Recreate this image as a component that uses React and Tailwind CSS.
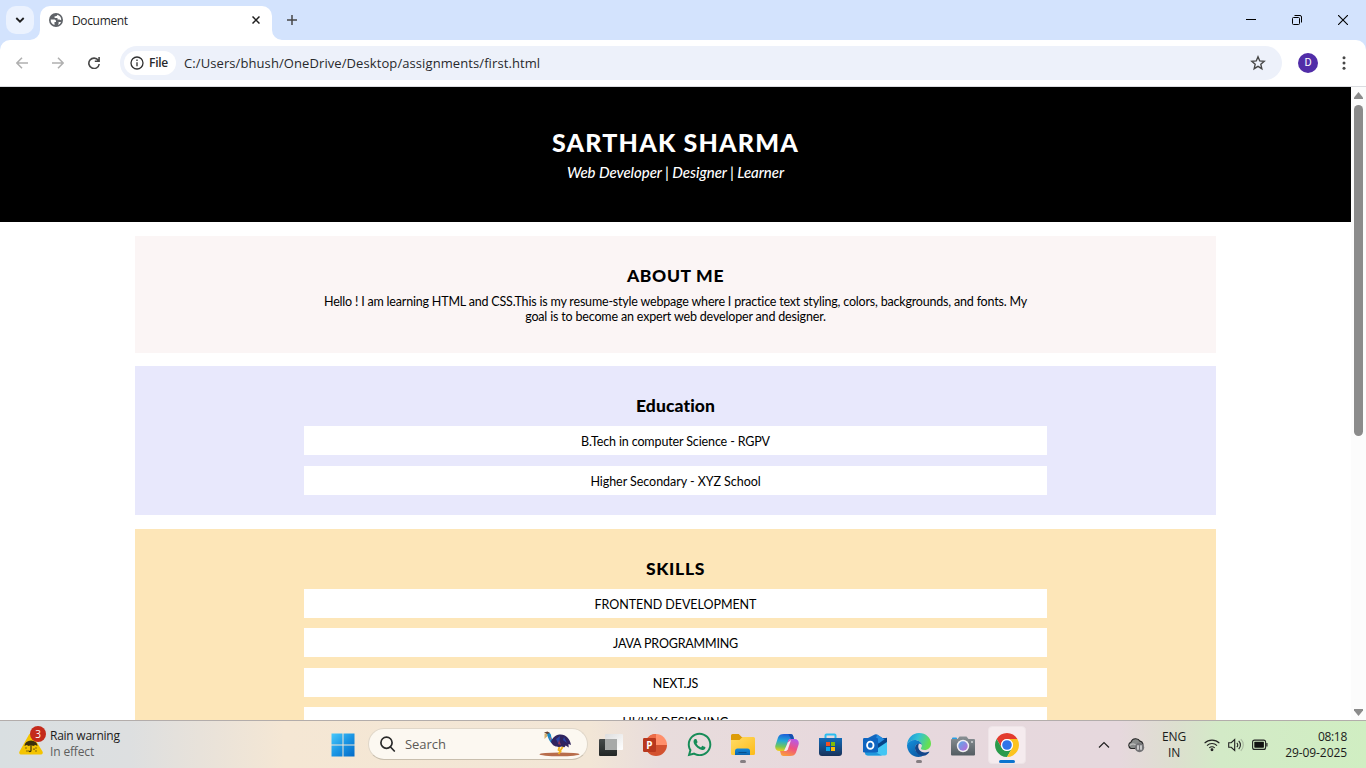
import React from "react";
import { FaWhatsapp } from "react-icons/fa";

function TabStrip() {
  return (
    <div className="flex h-10 shrink-0 bg-[#d3e3fd]">
      <div className="flex w-10 justify-center pt-[6px]">
        <div className="flex h-7 w-7 items-center justify-center rounded-[10px] bg-[#ebf2fe]">
          <svg width="10" height="10" viewBox="0 0 10 10" fill="none" stroke="#1f1f1f" strokeWidth="1.8"><path d="M1.3 3l3.7 3.7L8.7 3" /></svg>
        </div>
      </div>
      <div className="relative mt-[6px] flex h-[34px] w-[232px] items-start rounded-t-[10px] bg-white pl-[9px] pt-[7px]">
        <svg className="absolute -left-[10px] bottom-0" width="10" height="10" viewBox="0 0 10 10"><path d="M10 0v10H0A10 10 0 0 0 10 0z" fill="#fff" /></svg>
        <svg className="absolute -right-[10px] bottom-0" width="10" height="10" viewBox="0 0 10 10"><path d="M0 0v10h10A10 10 0 0 1 0 0z" fill="#fff" /></svg>
        <svg width="14" height="14" viewBox="0 0 14 14">
          <circle cx="7" cy="7" r="7" fill="#5f6368" />
          <path d="M1.700 6.500h3.100c1.500 0 2.200.7 2.200 1.700v.9H5.500v2.800C3 11.400 1.400 9.200 1.700 6.500zM8.200 1.800c0 1-.5 1.400-1.400 1.400H5.600v1.700h2.900v1.600h1.800l1.900.7c.3-2.700-1.300-4.900-4-5.400zM8.900 12c1.500-.5 2.600-1.500 3.100-3H9.600v1.400z" fill="#fff" />
        </svg>
        <span className="ml-[9px] text-[12px] leading-[15px] tracking-[-0.35px] text-[#1f1f1f]">Document</span>
        <svg className="ml-auto mr-[12px] mt-[3px]" width="8" height="8" viewBox="0 0 8 8" stroke="#1f1f1f" strokeWidth="1.500"><path d="M.5.5l7 7M7.500.5l-7 7" /></svg>
      </div>
      <svg className="ml-[15px] mt-[15px]" width="10" height="10" viewBox="0 0 10 10" stroke="#474747" strokeWidth="1.500"><path d="M5 0v10M0 5h10" /></svg>
      <div className="ml-auto flex items-center gap-[36px] pr-[18px]">
        <svg width="10" height="10" viewBox="0 0 10 10" stroke="#000"><path d="M0 4.500h10" /></svg>
        <svg width="10" height="10" viewBox="0 0 10 10" fill="none" stroke="#000"><rect x=".5" y="2.500" width="7" height="7" rx="1" /><path d="M2.500.5H8A1.500 1.500 0 0 1 9.500 2v5.500" /></svg>
        <svg width="10" height="10" viewBox="0 0 10 10" stroke="#000" strokeWidth="1.100"><path d="M0 0l10 10M10 0L0 10" /></svg>
      </div>
    </div>
  );
}

function Toolbar() {
  return (
    <div className="h-[47px] shrink-0 bg-[#d3e3fd]">
      <div className="flex h-full items-start rounded-t-[10px] border-b border-[#dadce0] bg-white pt-[6px]">
        <div className="flex h-[34px] items-center">
          <svg className="ml-[16px]" width="12" height="12" viewBox="0 0 12 12" fill="none" stroke="#b0b0b0" strokeWidth="1.500"><path d="M12 6H1M6 .7L.9 6 6 11.300" /></svg>
          <svg className="ml-[24px]" width="12" height="12" viewBox="0 0 12 12" fill="none" stroke="#b0b0b0" strokeWidth="1.500"><path d="M0 6h11M6 .7L11.100 6 6 11.300" /></svg>
          <svg className="ml-[24px]" width="12" height="12" viewBox="0 0 12 12" fill="none" stroke="#474747" strokeWidth="1.600"><path d="M10.300 3.300A5.200 5.200 0 1 0 11.200 7M11.100 0v4.200H6.800" /></svg>
        </div>
        <div className="ml-[20px] flex h-[34px] w-[1162px] items-center rounded-full bg-[#edf1fa] pl-1 pr-[16px]">
          <div className="flex h-[24px] w-[52px] items-center rounded-full bg-white pl-[6px]">
            <svg width="14" height="14" viewBox="0 0 14 14" fill="none" stroke="#303030" strokeWidth="1.300"><circle cx="7" cy="7" r="6" /><path d="M7 6.200v4M7 3.600v1.400" /></svg>
            <span className="ml-[5px] text-[12px] font-semibold leading-4 tracking-[-0.25px] text-[#28292c]">File</span>
          </div>
          <span className="ml-[8px] whitespace-nowrap text-[13px] leading-5 tracking-[0.09px] text-[#28292c]">C:/Users/bhush/OneDrive/Desktop/assignments/first.html</span>
          <svg className="ml-auto" width="16" height="16" viewBox="0 0 16 16" fill="none" stroke="#474747" strokeWidth="1.400"><path d="M8 1.800l1.750 4.150 4.450.4-3.380 2.950 1.020 4.400L8 11.350 4.160 13.700l1.020-4.400L1.800 6.350l4.450-.4z" /></svg>
        </div>
        <div className="ml-[16px] mt-[7px] flex h-5 w-5 items-center justify-center rounded-full bg-[#512da8] font-['Roboto',sans-serif] text-[11px] text-white">D</div>
        <svg className="ml-[24px] mt-[10px]" width="4" height="14" viewBox="0 0 4 14" fill="#474747"><circle cx="2" cy="1.700" r="1.500" /><circle cx="2" cy="7" r="1.500" /><circle cx="2" cy="12.300" r="1.500" /></svg>
      </div>
    </div>
  );
}

function Item({ children, className = "tracking-[-0.05px]" }) {
  return <li className={`mx-auto h-[29px] w-[743px] shrink-0 whitespace-nowrap bg-white text-[12.5px] leading-[31px] ${className}`}>{children}</li>;
}

function Page() {
  return (
    <div className="flex h-[633px] shrink-0 overflow-hidden bg-white">
      <div className="h-full w-[1351px] overflow-hidden text-center font-['Lato','Gill_Sans',sans-serif] text-black [font-variant-ligatures:none]">
        <header className="h-[135px] bg-black pt-[39px] text-white">
          <h1 className="text-[25px] font-black leading-[32px] tracking-[1.2px]">SARTHAK SHARMA</h1>
          <p className="mt-[5px] text-[15px] font-medium italic leading-[19px] tracking-[-0.05px]">Web Developer | Designer | Learner</p>
        </header>
        <section className="mx-auto mt-[14px] h-[117px] w-[1081px] bg-[#fbf5f5] pt-[28px]">
          <h2 className="text-[17.5px] font-black leading-[24px] tracking-[0.65px]">ABOUT ME</h2>
          <p className="mt-[6px] whitespace-nowrap text-[12.5px] leading-[15px]">
            <span className="tracking-[-0.19px]">Hello ! I am learning HTML and CSS.This is my resume-style webpage where I practice text styling, colors, backgrounds, and fonts. My</span><br />
            <span className="tracking-[-0.17px]">goal is to become an expert web developer and designer.</span>
          </p>
        </section>
        <section className="mx-auto mt-[13px] h-[149px] w-[1081px] bg-[#e8e8fc] pt-[28px]">
          <h2 className="text-[17.5px] font-black leading-[24px] tracking-[0.1px]">Education</h2>
          <ul className="mt-[8px] flex flex-col gap-[11px]">
            <Item className="tracking-[-0.13px]">B.Tech in computer Science - RGPV</Item>
            <Item>Higher Secondary - XYZ School</Item>
          </ul>
        </section>
        <section className="mx-auto mt-[14px] h-[260px] w-[1081px] bg-[#fde6b8] pt-[28px]">
          <h2 className="text-[17.5px] font-black leading-[24px] tracking-[0.7px]">SKILLS</h2>
          <ul className="mt-[8px] flex flex-col gap-[10.4px]">
            <Item>FRONTEND DEVELOPMENT</Item>
            <Item className="tracking-[-0.18px]">JAVA PROGRAMMING</Item>
            <Item className="tracking-[-0.15px]">NEXT.JS</Item>
            <Item>UI/UX DESIGNING</Item>
          </ul>
        </section>
      </div>
      <div className="flex h-full w-[15px] flex-col items-center bg-[#fcfcfc]">
        <svg className="mt-[5px] shrink-0" width="9" height="7" viewBox="0 0 9 7"><path d="M4.500 0L9 5.500V7H0V5.500z" fill="#8b8b8b" /></svg>
        <div className="mt-[6px] h-[331px] w-[9px] shrink-0 rounded-full bg-[#8b8b8b]" />
        <svg className="mb-[4px] mt-auto shrink-0" width="9" height="7" viewBox="0 0 9 7"><path d="M4.500 7L9 1.500V0H0v1.500z" fill="#8b8b8b" /></svg>
      </div>
    </div>
  );
}

function Slot({ children, running }) {
  return (
    <div className="relative flex w-11 items-center justify-center">
      {children}
      {running && <span className="absolute bottom-[5px] left-[19px] h-[3px] w-[6px] rounded-full bg-[#857e82]" />}
    </div>
  );
}

function Apps() {
  return (
    <>
      <Slot>
        <svg width="24" height="24" viewBox="0 0 24 24">
          <defs><linearGradient id="tv" x1="0" y1="0" x2="0" y2="1"><stop stopColor="#454a4a" /><stop offset="1" stopColor="#222625" /></linearGradient><linearGradient id="tw" x1="0" y1="0" x2="1" y2="1"><stop stopColor="#ddd" /><stop offset="1" stopColor="#fff" /></linearGradient></defs>
          <rect x="0" y="6" width="18" height="17" rx="1" fill="url(#tv)" /><rect x="6" y="1" width="18" height="16" rx="1" fill="url(#tw)" /><path d="M6 6h12v11H7a1 1 0 0 1-1-1z" fill="#a7a9a8" />
        </svg>
      </Slot>
      <Slot>
        <svg width="24" height="24" viewBox="0 0 24 24">
          <path d="M13 1a11 11 0 1 0 11 11H13z" fill="#d35230" /><path d="M13 1a11 11 0 0 1 11 11H13z" fill="#ff8f6b" /><path d="M2 12a11 11 0 0 1 11-11v11z" fill="#ed6c47" />
          <rect x="0" y="5" width="13" height="14" rx="1.200" fill="#b9381e" />
          <text x="6.500" y="15.500" textAnchor="middle" fontSize="10" fontWeight="700" fill="#fff">P</text>
        </svg>
      </Slot>
      <Slot><FaWhatsapp size={27} color="#178c58" /></Slot>
      <Slot running>
        <svg width="24" height="24" viewBox="0 0 24 24">
          <defs><linearGradient id="fo" x1="0" y1="0" x2="1" y2="1"><stop stopColor="#ffdc68" /><stop offset="1" stopColor="#fdbb18" /></linearGradient><linearGradient id="fb" x1="0" y1="0" x2="0" y2="1"><stop stopColor="#1688d8" /><stop offset="1" stopColor="#0b65b0" /></linearGradient></defs>
          <path d="M0 2.500A1.500 1.500 0 0 1 1.500 1h6.200l3 3H22v5H0z" fill="#dd9c08" /><path d="M0 7h8.500l3-3H22.500A1.500 1.500 0 0 1 24 5.500V20.500A1.500 1.500 0 0 1 22.500 22h-21A1.500 1.500 0 0 1 0 20.500z" fill="url(#fo)" />
          <path d="M4 22v-4a2.500 2.500 0 0 1 2.500-2.500h10A2.500 2.500 0 0 1 19 18v4z" fill="url(#fb)" /><path d="M7.500 19h8v1h-8z" fill="#084f8c" />
        </svg>
      </Slot>
      <Slot>
        <svg width="24" height="24" viewBox="0 0 24 24">
          <defs>
            <linearGradient id="c1" x1=".4" y1="0" x2=".3" y2="1"><stop stopColor="#1c5fd8" /><stop offset=".4" stopColor="#22a9d8" /><stop offset=".75" stopColor="#75c657" /><stop offset="1" stopColor="#f0cd1b" /></linearGradient>
            <linearGradient id="c2" x1=".7" y1="0" x2=".3" y2="1"><stop stopColor="#b659e8" /><stop offset=".5" stopColor="#ef5280" /><stop offset="1" stopColor="#fa9b3c" /></linearGradient>
          </defs>
          <path d="M9 1h6.500c1.400 0 2.300.8 2.700 2.200L19 6h-3c-1.500 0-2.300.9-2.700 2.300L11 16c-.5 1.500-1.200 2-2.400 2H4.500C1 18-.3 15.500.4 12.500L3 4.500C3.900 2 5.700 1 9 1z" fill="url(#c1)" />
          <path d="M15 23H8.500c-1.400 0-2.300-.8-2.700-2.200L5 18h3c1.500 0 2.300-.9 2.700-2.300L13 8c.5-1.500 1.200-2 2.400-2h4.100c3.500 0 4.800 2.500 4.100 5.500L21 19.500c-.9 2.500-2.700 3.500-6 3.500z" fill="url(#c2)" />
          <path d="M12.800 9.500L16 7l-3.200 9.500-1.600 1.500H9z" fill="#f6e9ef" />
          <path d="M15.500 1c1.400 0 2.300.8 2.700 2.200L19 6h-3l-2.700-5z" fill="#154fae" />
        </svg>
      </Slot>
      <Slot>
        <svg width="24" height="24" viewBox="0 0 24 24">
          <defs><linearGradient id="st" x1="0" y1="0" x2="0" y2="1"><stop stopColor="#126bb9" /><stop offset="1" stopColor="#193259" /></linearGradient></defs>
          <path d="M6.500 6V2.500A1 1 0 0 1 7.500 1.500h8a1 1 0 0 1 1 1V6" fill="none" stroke="#2bbdf0" strokeWidth="2" />
          <path d="M0 5h23v15a3 3 0 0 1-3 3H3a3 3 0 0 1-3-3z" fill="url(#st)" />
          <path d="M7 9h4v4H7z" fill="#f15022" /><path d="M12 9h4v4h-4z" fill="#80bb08" /><path d="M7 14h4v4H7z" fill="#08a6ef" /><path d="M12 14h4v4h-4z" fill="#ffbb03" />
        </svg>
      </Slot>
      <Slot>
        <svg width="24" height="24" viewBox="0 0 24 24">
          <path d="M3 6l8.800-4.500a2.500 2.500 0 0 1 2.300 0L24 8v5H3z" fill="#1267bf" /><path d="M8 5h16v5l-9 7H5z" fill="#0b52a5" /><path d="M14 1.500L24 8l-7 5-4-7z" fill="#238de1" />
          <path d="M2 19L24 8v12.500a2 2 0 0 1-2 2H5a3 3 0 0 1-3-3z" fill="#43c6f4" /><path d="M2 14l17 8.500H5a3 3 0 0 1-3-3z" fill="#2097dc" /><path d="M15 11l9-6.500V9l-9 6z" fill="#074488" />
          <rect x="0" y="5" width="15" height="14.500" rx="1.200" fill="#0f65c0" /><ellipse cx="7.300" cy="12.200" rx="3.200" ry="3.600" fill="none" stroke="#fff" strokeWidth="1.900" />
        </svg>
      </Slot>
      <Slot running>
        <svg width="24" height="24" viewBox="0 0 24 24">
          <defs><linearGradient id="e1" x1="0" y1="0" x2="1" y2=".3"><stop stopColor="#168ed8" /><stop offset=".5" stopColor="#32c1d4" /><stop offset="1" stopColor="#66df50" /></linearGradient><linearGradient id="e2" x1="0" y1="0" x2=".7" y2="1"><stop stopColor="#1390dc" /><stop offset="1" stopColor="#0c59a4" /></linearGradient></defs>
          <path d="M0 12C.5 5 5.500 0 12 0c7 0 12 5 12 10.500 0 4-3 6.500-6.500 6.500-2.500 0-4-1-3.500-2 .8-1 1-1.900.8-3C14.300 9 11 7 7.500 7 4 7 1.200 9 0 12z" fill="url(#e1)" />
          <path d="M0 12C1 9 4 7 7.500 7c3.800 0 7 2.300 7.400 5-1.600-2.300-6.900-1.300-6.900 3 0 4 4.500 7.500 9 7-1.400 1.300-3.500 2-5.500 2C5 24 0 18.500 0 12z" fill="url(#e2)" />
          <path d="M8 15c0-2.500 1.600-4 4-4.400-2.500 4.800 1.500 9.400 6.500 8.900 1.600-.2 3-.8 4-.8-1.200 2.300-3.500 4-6 4C12 22.900 8 19.500 8 15z" fill="#12458a" />
        </svg>
      </Slot>
      <Slot>
        <svg width="24" height="24" viewBox="0 0 24 24">
          <defs><linearGradient id="ca" x1="0" y1="0" x2="0" y2="1"><stop stopColor="#899094" /><stop offset="1" stopColor="#535c62" /></linearGradient><linearGradient id="cl" x1="0" y1="0" x2="1" y2="1"><stop stopColor="#57adeb" /><stop offset="1" stopColor="#c066d8" /></linearGradient></defs>
          <path d="M1 7V5.500A1 1 0 0 1 2 4.500h3a1 1 0 0 1 1 1V7z" fill="#26a0e6" />
          <path d="M0 7a1 1 0 0 1 1-1h5.500l2-2.500h7L17.500 6H23a1 1 0 0 1 1 1v14.500a1 1 0 0 1-1 1H1a1 1 0 0 1-1-1z" fill="url(#ca)" />
          <circle cx="12" cy="13" r="6.200" fill="#f1eef3" /><circle cx="12" cy="13" r="4.700" fill="url(#cl)" /><circle cx="21" cy="9" r="1" fill="#cfd3d5" />
        </svg>
      </Slot>
      <Slot>
        <div className="flex h-[38px] w-[38px] shrink-0 items-center justify-center rounded-[4px] border border-[#eee4e7] bg-[#f5ebee]">
          <svg className="shrink-0" width="24" height="24" viewBox="0 0 24 24">
            <path d="M12 6h10.390A12 12 0 0 0 1.610 6L6.800 15A6 6 0 0 1 12 6z" fill="#e33b2e" />
            <path d="M1.610 6A12 12 0 0 0 12 24l5.200-9A6 6 0 0 1 6.800 15z" fill="#2b9b4b" />
            <path d="M22.390 6A12 12 0 0 1 12 24l5.200-9A6 6 0 0 0 12 6z" fill="#fcc31e" />
            <circle cx="12" cy="12" r="6" fill="#fff" /><circle cx="12" cy="12" r="4.800" fill="#2f74e8" />
          </svg>
        </div>
        <span className="absolute bottom-[5px] left-[14px] h-[3px] w-4 rounded-full bg-[#0b74cf]" />
      </Slot>
    </>
  );
}

function Bird() {
  return (
    <svg width="42" height="26" viewBox="0 0 42 26">
      <ellipse cx="20.500" cy="23.300" rx="20" ry="1.900" fill="#b86d4b" />
      <path d="M21 14l-1.500 5 2 1.500-2 2.500M25 14l-4 6" fill="none" stroke="#f0b41f" strokeWidth="1.800" />
      <path d="M7 2.500c2-2 4.500-.5 5 1.500.3 2.500 1 5.500 4 6l-1 3c-4-.5-5.500-5.500-6.500-8z" fill="#1889c8" />
      <path d="M12 11c1-4 4.500-7 8.500-7.500 6-.6 10.500 4 11.500 10.500l-2.500-1 .2 3.500-3-2-1.200 1.800-2.500-.8c-4 1-9 .5-11-4.500z" fill="#30245f" />
      <path d="M17 8l4-3-1 9zM25 6l3 6-4-3z" fill="#2a44a8" /><path d="M20 9l2 5-3-1z" fill="#8e3559" />
      <path d="M5 1.500L8.500.5 11 2 8 3z" fill="#67412f" /><path d="M5.500 2.500L8.500 3 8 5.500 5.500 8z" fill="#d5b06d" /><path d="M10.500 6l1.500 1-.8 2.500z" fill="#e4535e" />
    </svg>
  );
}

function Taskbar() {
  return (
    <div className="flex h-[48px] shrink-0 border-t border-[#b3adab] bg-[linear-gradient(90deg,#d9dfe1_0px,#dddfe0_130px,#e8e2da_200px,#f5e7d4_285px,#f2e6d6_590px,#e8dcdc_660px,#e7d8dd_860px,#e6d8dd_1120px,#dddfcf_1175px,#d3eac7_1220px,#d0eec2_1366px)]">
      <div className="flex w-[321px] pl-[18px]">
        <div className="relative h-full w-7">
          <svg className="mt-[10px]" width="26" height="25" viewBox="0 0 26 25">
            <path d="M11 3.500c.8-1.300 2.200-1.300 3 0l10.500 17c.8 1.500 0 3-1.500 3H3c-1.500 0-2.300-1.500-1.500-3z" fill="#f4c400" />
            <path d="M6.500 15a6.500 5.500 0 0 1 13 0l-2.100-1-2.200 1-2.200-1-2.200 1-2.200-1z" fill="#3a2f0c" /><path d="M13 14v5.500a1.100 1.100 0 0 1-2.200 0" fill="none" stroke="#3a2f0c" strokeWidth="1.200" />
            <path d="M8 16.500v1M9 19.500v1M18 16.500v1M16 17.500v1.200M18 19.500v1" stroke="#3a2f0c" strokeWidth="1.200" />
          </svg>
          <span className="absolute left-[12px] top-[5px] flex h-4 w-4 items-center justify-center rounded-full bg-[#c42b1c] text-[10px] font-medium text-white">3</span>
        </div>
        <div className="ml-[4px] pt-[7px] text-[12px] leading-4">
          <div className="tracking-[-0.25px] text-[#1b1b1b]">Rain warning</div>
          <div className="tracking-[-0.15px] text-[#5e5e5e]">In effect</div>
        </div>
      </div>
      <Slot>
        <svg width="24" height="24" viewBox="0 0 24 24">
          <defs><linearGradient id="wi" gradientUnits="userSpaceOnUse" x1="0" y1="0" x2="24" y2="24"><stop stopColor="#4bcbfc" /><stop offset=".5" stopColor="#1b96e4" /><stop offset="1" stopColor="#0168c6" /></linearGradient></defs>
          <path d="M.5.500h11v11H.5zM12.500.500h11v11h-11zM.5 12.500h11v11H.5zM12.500 12.500h11v11h-11z" fill="url(#wi)" />
        </svg>
      </Slot>
      <div className="ml-[3px] mt-[7px] flex h-[32px] w-[220px] items-center rounded-full border border-[#e0d7c9] border-b-[#c9bfae] bg-[#fcf8f1] pl-[11px] pr-[6px]">
        <svg width="16" height="16" viewBox="0 0 16 16" fill="none" stroke="#2a2a2a" strokeWidth="1.700"><circle cx="6.500" cy="6.700" r="5.600" /><path d="M10.500 11l3.800 4" strokeLinecap="round" /></svg>
        <span className="ml-[9px] mt-px text-[13px] tracking-[-0.05px] text-[#5c5a57]">Search</span>
        <span className="ml-auto"><Bird /></span>
      </div>
      <div className="ml-[1px] flex"><Apps /></div>
      <div className="ml-auto flex items-center pr-[19px] text-[#1b1b1b]">
        <svg width="12" height="12" viewBox="0 0 12 12" fill="none" stroke="#222" strokeWidth="1.200"><path d="M1 8.500l5-5 5 5" /></svg>
        <svg className="ml-[17px]" width="18" height="16" viewBox="0 0 18 16">
          <path d="M4 11.500a3.500 3.500 0 0 1 0-6.500 5 5 0 0 1 9-.8 3.500 3.500 0 0 1 1.500 6.300l-2 1z" fill="#888b8a" stroke="#252525" strokeWidth="1.200" /><path d="M2.500 8.500c3-2.500 6-1.500 8 1" stroke="#bbb" strokeWidth="1.500" fill="none" />
          <circle cx="12.500" cy="10.500" r="4.700" fill="#747477" /><path d="M11 8.300v4.400M14 8.300v4.400" stroke="#fff" strokeWidth="1.200" />
        </svg>
        <div className="ml-[15px] w-[28px] text-center text-[12px] leading-4 tracking-[-0.2px]">ENG<br />IN</div>
        <svg className="ml-[16px]" width="16" height="14" viewBox="0 0 16 14" fill="none" stroke="#222" strokeWidth="1.100"><path d="M.6 5.200a10.400 10.400 0 0 1 14.800 0M3 7.600a7 7 0 0 1 10 0M5.300 9.900a3.800 3.800 0 0 1 5.400 0" /><circle cx="8" cy="11.800" r=".9" fill="#222" /></svg>
        <svg className="ml-[8px]" width="16" height="14" viewBox="0 0 16 14" fill="none" stroke="#222" strokeWidth="1.100"><path d="M.7 4.700h2.500L6.700 1.500v11L3.200 9.300H.7zM8.800 4.800a3 3 0 0 1 0 4.400M10.700 2.800a6 6 0 0 1 0 8.400" /><path d="M12.800 1.200a8 8 0 0 1 0 11.600" stroke="#a9b9a0" /></svg>
        <svg className="ml-[8px]" width="16" height="12" viewBox="0 0 16 12"><rect x=".6" y="1.100" width="13" height="9.300" rx="2" fill="none" stroke="#222" strokeWidth="1.100" /><rect x="2.300" y="2.800" width="9.600" height="5.900" rx=".6" fill="#111" /><path d="M14.300 4h1.200v3.500h-1.200z" fill="#222" /></svg>
        <div className="ml-[16px] w-[63px] whitespace-nowrap text-right text-[12px] leading-4 tracking-[-0.08px]"><span className="tracking-[-0.3px]">08:18</span><br />29-09-2025</div>
      </div>
    </div>
  );
}

export default function App() {
  return (
    <div className="flex h-[768px] w-[1366px] flex-col overflow-hidden font-['Open_Sans',sans-serif]">
      <TabStrip />
      <Toolbar />
      <Page />
      <Taskbar />
    </div>
  );
}
